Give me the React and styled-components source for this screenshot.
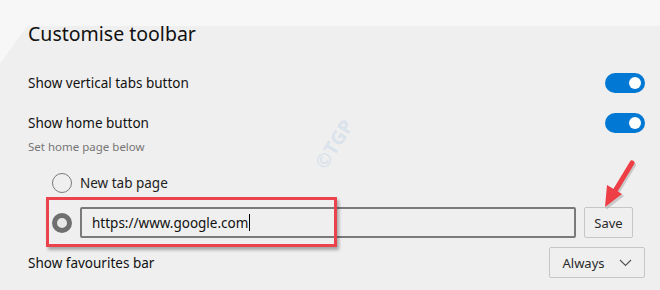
import React from "react";
import styled, { createGlobalStyle } from "styled-components";

const Global = createGlobalStyle`
  html, body {
    margin: 0;
    padding: 0;
    background: #f7f7f7;
  }
  body {
    font-family: "Noto Sans", "Open Sans", sans-serif;
    color: #1b1b1b;
  }
`;

const Page = styled.div`
  position: relative;
  width: 660px;
  height: 290px;
  overflow: hidden;
  background: #f7f7f7;
  padding-top: 26px;
  box-sizing: border-box;
`;

const Panel = styled.div`
  height: 100%;
  background: #efefef;
  clip-path: polygon(27px 0, 100% 0, 100% 100%, 0 100%, 0 38px);
  padding: 0 15px 0 28px;
  box-sizing: border-box;
  display: flex;
  flex-direction: column;
`;

const Title = styled.h1`
  margin: 0 0 23px;
  font-size: 19.5px;
  font-weight: 400;
  line-height: 16px;
  color: #111;
`;

const Row = styled.div`
  display: flex;
  align-items: center;
  justify-content: space-between;
  height: ${(p) => p.h || 36}px;
  margin-top: ${(p) => p.mt || 0}px;
`;

const Label = styled.span`
  font-size: 13.5px;
  color: #111;
`;

const Hint = styled.div`
  font-size: 11.5px;
  line-height: 12px;
  color: #767676;
`;

const Toggle = styled.div`
  width: 40px;
  height: 20px;
  border-radius: 10px;
  background: #0078d4;
  display: flex;
  align-items: center;
  justify-content: flex-end;
  padding: 0 4px;
  box-sizing: border-box;
  &::after {
    content: "";
    width: 12px;
    height: 12px;
    border-radius: 50%;
    background: #fff;
  }
`;

const Options = styled.div`
  margin-left: 24px;
  display: flex;
  flex-direction: column;
`;

const Option = styled.div`
  display: flex;
  align-items: center;
  gap: 8px;
  height: ${(p) => p.h}px;
  margin-top: ${(p) => p.mt || 0}px;
`;

const Radio = styled.span`
  width: 20px;
  height: 20px;
  border-radius: 50%;
  box-sizing: border-box;
  flex: none;
  border: ${(p) => (p.checked ? "5px solid #6f6f6f" : "1px solid #7a7a7a")};
  background: ${(p) => (p.checked ? "#e8e8e8" : "transparent")};
`;

const OptionText = styled.span`
  font-size: 13.5px;
  color: #222;
`;

const UrlInput = styled.div`
  width: 496px;
  height: 31px;
  border: 2px solid #7a7a7a;
  border-radius: 2px;
  box-sizing: border-box;
  display: flex;
  align-items: center;
  padding-left: 10px;
  font-size: 13.5px;
  color: #111;
`;

const Caret = styled.span`
  display: inline-block;
  width: 1px;
  height: 17px;
  background: #000;
  margin-left: 1px;
`;

const Button = styled.div`
  height: 31px;
  box-sizing: border-box;
  border: 1px solid #c6c6c6;
  border-radius: 2px;
  display: flex;
  align-items: center;
  justify-content: center;
  font-size: 13px;
  color: #2a2a2a;
  width: ${(p) => p.w}px;
  margin-left: ${(p) => p.ml || 0}px;
  gap: 14px;
`;

const Highlight = styled.div`
  position: absolute;
  left: 46px;
  top: 197px;
  width: 291px;
  height: 50px;
  border: 3px solid #ea434b;
  box-sizing: border-box;
  box-shadow: 2px 3px 3px rgba(0, 0, 0, 0.3);
  pointer-events: none;
`;

const Watermark = styled.div`
  position: absolute;
  left: 307px;
  top: 131px;
  transform: rotate(-58deg);
  font-size: 19px;
  font-weight: 700;
  color: #dae2eb;
  letter-spacing: 0.5px;
`;

const ArrowSvg = styled.svg`
  position: absolute;
  left: 595px;
  top: 155px;
  overflow: visible;
`;

function Arrow() {
  return (
    <ArrowSvg width="50" height="60" viewBox="0 0 50 60">
      <g transform="translate(1.5,2)" fill="#b0b0b0" stroke="#b0b0b0" opacity="0.6">
        <line x1="37" y1="8" x2="20" y2="36" strokeWidth="5" strokeLinecap="round" />
        <polygon points="10,52 12,30 27,39" />
      </g>
      <line x1="37" y1="8" x2="20" y2="36" stroke="#ee3f47" strokeWidth="5" strokeLinecap="round" />
      <polygon points="10,52 12,30 27,39" fill="#ee3f47" />
    </ArrowSvg>
  );
}

export default function App() {
  return (
    <Page>
      <Global />
      <Panel>
        <Title>Customise toolbar</Title>
        <Row>
          <Label>Show vertical tabs button</Label>
          <Toggle />
        </Row>
        <Row mt={4}>
          <Label>Show home button</Label>
          <Toggle />
        </Row>
        <Hint>Set home page below</Hint>
        <Options>
          <Option h={20} mt={20}>
            <Radio />
            <OptionText>New tab page</OptionText>
          </Option>
          <Option h={31} mt={14}>
            <Radio checked />
            <UrlInput>
              https://www.google.com
              <Caret />
            </UrlInput>
            <Button w={49}>Save</Button>
          </Option>
        </Options>
        <Row h={31} mt={9}>
          <Label>Show favourites bar</Label>
          <Button w={96}>
            Always
            <svg width="13" height="8" viewBox="0 0 13 8">
              <polyline points="1,1 6.5,6.5 12,1" fill="none" stroke="#555" strokeWidth="1.2" />
            </svg>
          </Button>
        </Row>
      </Panel>
      <Watermark>©TGP</Watermark>
      <Highlight />
      <Arrow />
    </Page>
  );
}
